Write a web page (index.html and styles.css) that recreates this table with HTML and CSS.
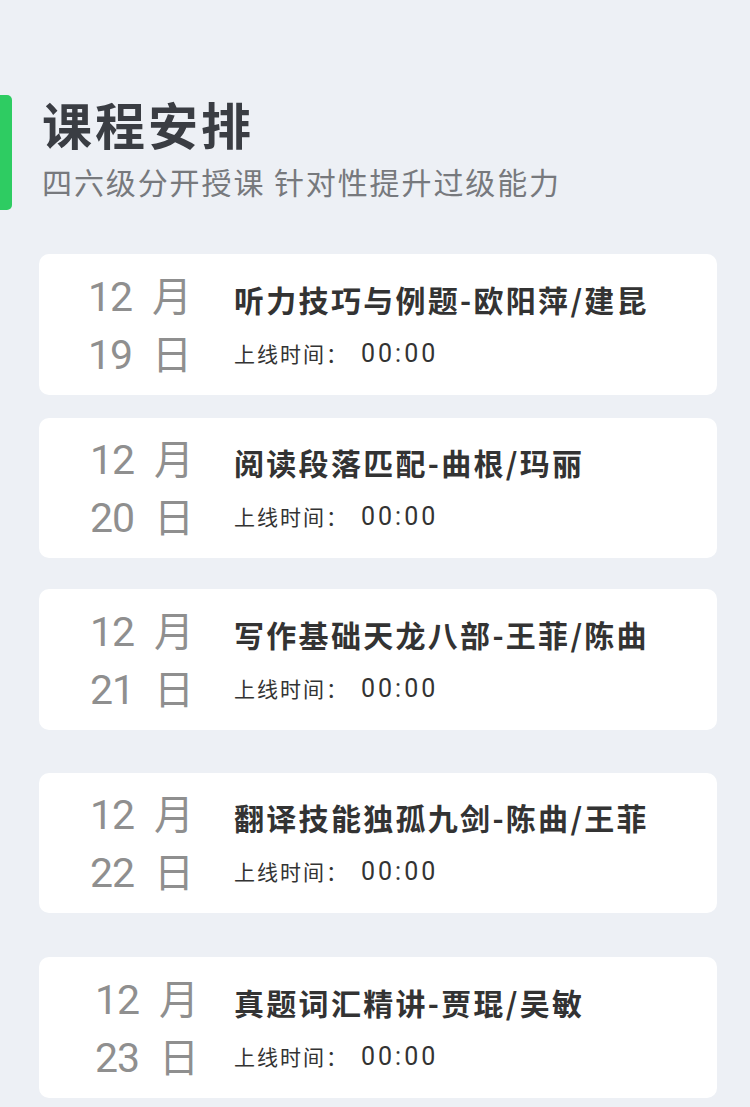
FILE: index.html
```html
<!DOCTYPE html>
<html lang="zh-CN">
<head>
<meta charset="utf-8">
<title>课程安排</title>
<link rel="stylesheet" href="styles.css">
</head>
<body>
<div class="page">
  <header class="section-head">
    <div class="accent"></div>
    <div class="head-text">
      <h1 class="title">课程安排</h1>
      <p class="subtitle">四六级分开授课 针对性提升过级能力</p>
    </div>
  </header>

  <ul class="list">
    <li class="card c1">
      <div class="date"><div class="dl"><span class="num">12</span><span>月</span></div><div class="dl"><span class="num">19</span><span>日</span></div></div>
      <div class="info"><div class="name">听力技巧与例题-欧阳萍/建昆</div><div class="time">上线时间：<span class="clock">00:00</span></div></div>
    </li>
    <li class="card c2">
      <div class="date"><div class="dl"><span class="num">12</span><span>月</span></div><div class="dl"><span class="num">20</span><span>日</span></div></div>
      <div class="info"><div class="name">阅读段落匹配-曲根/玛丽</div><div class="time">上线时间：<span class="clock">00:00</span></div></div>
    </li>
    <li class="card c3">
      <div class="date"><div class="dl"><span class="num">12</span><span>月</span></div><div class="dl"><span class="num">21</span><span>日</span></div></div>
      <div class="info"><div class="name">写作基础天龙八部-王菲/陈曲</div><div class="time">上线时间：<span class="clock">00:00</span></div></div>
    </li>
    <li class="card c4">
      <div class="date"><div class="dl"><span class="num">12</span><span>月</span></div><div class="dl"><span class="num">22</span><span>日</span></div></div>
      <div class="info"><div class="name">翻译技能独孤九剑-陈曲/王菲</div><div class="time">上线时间：<span class="clock">00:00</span></div></div>
    </li>
    <li class="card c5">
      <div class="date"><div class="dl"><span class="num">12</span><span>月</span></div><div class="dl"><span class="num">23</span><span>日</span></div></div>
      <div class="info"><div class="name">真题词汇精讲-贾琨/吴敏</div><div class="time">上线时间：<span class="clock">00:00</span></div></div>
    </li>
  </ul>
</div>
</body>
</html>
```

FILE: styles.css
```css
* { box-sizing: border-box; }
html, body {
  margin: 0;
  padding: 0;
  background: #edf0f5;
}
body {
  font-family: "Noto Sans CJK SC", "Noto Sans", sans-serif;
  width: 750px;
  height: 1107px;
  overflow: hidden;
}
.page {
  padding-top: 95px;
}
.section-head {
  display: flex;
  align-items: stretch;
  gap: 30px;
  height: 115px;
}
.accent {
  width: 12px;
  background: #2ecc62;
  border-radius: 0 5px 5px 0;
}
.head-text {
  display: flex;
  flex-direction: column;
}
.title {
  margin: 0;
  font-size: 50px;
  line-height: 56px;
  font-weight: 700;
  color: #3a3d43;
  letter-spacing: 3px;
}
.subtitle {
  margin: 10px 0 0;
  font-size: 30px;
  line-height: 40px;
  color: #77797d;
  letter-spacing: 1.9px;
}
.list {
  list-style: none;
  margin: 44px 0 0;
  padding: 0 33px 0 39px;
}
.card {
  display: flex;
  align-items: center;
  height: 141px;
  background: #fff;
  border-radius: 10px;
  padding-left: 49px;
}
.c2 { margin-top: 23px; height: 140px; }
.c3 { margin-top: 31px; }
.c4 { margin-top: 43px; height: 140px; }
.c5 { margin-top: 44px; }
.date {
  width: 146px;
  padding-left: 2px;
  display: flex;
  flex-direction: column;
  font-size: 40px;
  line-height: 55px;
  color: #8f8f8f;
}
.c1 .date { padding-left: 0; }
.c5 .date { padding-left: 7px; }
.dl {
  display: flex;
  align-items: baseline;
  gap: 20px;
}
.num {
  font-family: Roboto, "Liberation Sans", sans-serif;
  font-size: 41px;
  letter-spacing: -1px;
}
.info {
  display: flex;
  flex-direction: column;
  gap: 21px;
}
.name {
  font-size: 30px;
  line-height: 36px;
  font-weight: 700;
  color: #333;
  letter-spacing: 2.3px;
}
.time {
  font-size: 21px;
  line-height: 30px;
  color: #333;
  letter-spacing: 2px;
}
.clock {
  font-family: Roboto, "Liberation Sans", sans-serif;
  font-size: 25px;
  letter-spacing: 3px;
  margin-left: 12px;
}
```
